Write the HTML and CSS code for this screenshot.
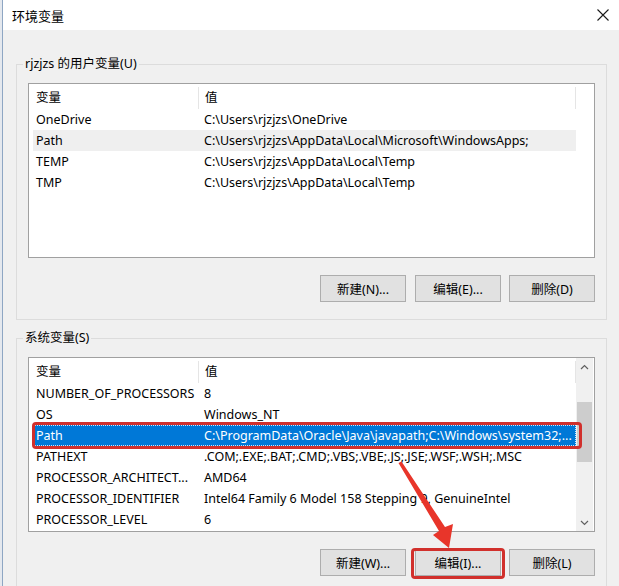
FILE: index.html
```html
<!DOCTYPE html>
<html lang="zh-CN">
<head>
    <meta charset="UTF-8">
    <title>环境变量</title>
    <link rel="stylesheet" href="styles.css">
</head>
<body>
<div class="screen">
    <div class="backdrop"></div>
    <div class="dialog">
        <div class="titlebar">
            <span class="title">环境变量</span>
            <svg class="close" width="12" height="12" viewBox="0 0 12 12">
                <path d="M0.5 0.5 L11.5 11.5 M11.5 0.5 L0.5 11.5" stroke="#1a1a1a" stroke-width="1.1" fill="none"/>
            </svg>
        </div>

        <div class="body">
            <fieldset class="group">
                <legend>rjzjzs 的用户变量(U)</legend>
                <div class="list">
                    <div class="rows">
                        <div class="row head"><span class="c1">变量</span><span class="c2">值</span></div>
                        <div class="row"><span class="c1">OneDrive</span><span class="c2">C:\Users\rjzjzs\OneDrive</span></div>
                        <div class="row hover"><span class="c1">Path</span><span class="c2">C:\Users\rjzjzs\AppData\Local\Microsoft\WindowsApps;</span></div>
                        <div class="row"><span class="c1">TEMP</span><span class="c2">C:\Users\rjzjzs\AppData\Local\Temp</span></div>
                        <div class="row"><span class="c1">TMP</span><span class="c2">C:\Users\rjzjzs\AppData\Local\Temp</span></div>
                    </div>
                </div>
                <div class="buttons">
                    <button class="btn">新建(N)...</button>
                    <button class="btn">编辑(E)...</button>
                    <button class="btn">删除(D)</button>
                </div>
            </fieldset>

            <fieldset class="group">
                <legend>系统变量(S)</legend>
                <div class="list">
                    <div class="rows">
                        <div class="row head"><span class="c1">变量</span><span class="c2">值</span></div>
                        <div class="row"><span class="c1">NUMBER_OF_PROCESSORS</span><span class="c2">8</span></div>
                        <div class="row"><span class="c1">OS</span><span class="c2">Windows_NT</span></div>
                        <div class="row selected">
                            <span class="c1">Path</span><span class="c2">C:\ProgramData\Oracle\Java\javapath;C:\Windows\system32;...</span>
                            <span class="mark row-mark"></span>
                        </div>
                        <div class="row"><span class="c1">PATHEXT</span><span class="c2">.COM;.EXE;.BAT;.CMD;.VBS;.VBE;.JS;.JSE;.WSF;.WSH;.MSC</span></div>
                        <div class="row"><span class="c1">PROCESSOR_ARCHITECT...</span><span class="c2">AMD64</span></div>
                        <div class="row"><span class="c1">PROCESSOR_IDENTIFIER</span><span class="c2">Intel64 Family 6 Model 158 Stepping 9, GenuineIntel</span></div>
                        <div class="row"><span class="c1">PROCESSOR_LEVEL</span><span class="c2">6</span></div>
                    </div>
                    <div class="scrollbar">
                        <div class="arrow-btn">
                            <svg width="9" height="6" viewBox="0 0 9 6"><path d="M1 5 L4.5 1.5 L8 5" stroke="#606060" stroke-width="1.2" fill="none"/></svg>
                        </div>
                        <div class="track"><div class="thumb"></div></div>
                        <div class="arrow-btn">
                            <svg width="9" height="6" viewBox="0 0 9 6"><path d="M1 1 L4.5 4.5 L8 1" stroke="#606060" stroke-width="1.2" fill="none"/></svg>
                        </div>
                    </div>
                </div>
                <div class="buttons">
                    <button class="btn">新建(W)...</button>
                    <button class="btn marked">编辑(I)...<span class="mark btn-mark"></span></button>
                    <button class="btn">删除(L)</button>
                </div>
            </fieldset>
        </div>
    </div>

    <!-- annotation arrow, drawn in page coordinates -->
    <svg class="pointer" width="619" height="586" viewBox="0 0 619 586">
        <polygon points="398.5,463 401.5,461.5 445,527 453,524 449,548 433,535 439,531" fill="#e8352a"/>
    </svg>
</div>
</body>
</html>
```

FILE: styles.css
```css
body { margin: 0; font-family: "Noto Sans", "Noto Sans CJK SC", sans-serif; font-size: 12.5px; color: #000; }

.screen { position: relative; display: flex; width: 619px; height: 586px; overflow: hidden; background: #f0f0f0; }
.backdrop { width: 3px; flex: none; background: #e4e8ee; box-shadow: inset -1px 0 #8ea6c3; }
.dialog { flex: 1; display: flex; flex-direction: column; background: #f0f0f0; }

.titlebar { height: 30px; flex: none; display: flex; align-items: center; justify-content: space-between; padding: 0 10px 0 9px; background: #fff; }
.title { font-size: 13px; }
.close { margin-top: -1px; }

.body { padding: 25px 12px 0 13px; }

.group { margin: 0; min-width: 0; padding: 10px 11px 17px 11px; border: 1px solid #dcdcdc; }
.group + .group { margin-top: 9px; }
.group legend { margin-left: -5px; padding: 0 2px; line-height: 18px; font-size: 12.5px; }

.list { display: flex; height: 173px; border: 1px solid #a0a0a0; background: #fff; }
.rows { width: 543px; flex: none; padding-left: 4px; }

.row { position: relative; display: flex; height: 21px; align-items: center; white-space: nowrap; }
.row.head { height: 25px; }
.c1 { width: 162px; flex: none; padding-left: 3px; overflow: hidden; }
.c2 { flex: 1; padding-left: 6px; overflow: hidden; }
.head .c1, .head .c2 { height: 22px; line-height: 22px; margin-top: 2px; }
.head .c1 { border-right: 1px solid #e5e5e5; }
.head .c2 { border-right: 1px solid #e5e5e5; }

.row.hover { background: #efefef; }
.row.selected { background: #0078d7; color: #fff; outline: 1px dotted #cfe4f7; outline-offset: -1px; }

.scrollbar { width: 17px; flex: none; display: flex; flex-direction: column; background: #f0f0f0; }
.arrow-btn { height: 17px; display: flex; align-items: center; justify-content: center; }
.track { flex: 1; }
.thumb { height: 60px; margin: 27px 1px 0 1px; background: #cdcdcd; }

.buttons { display: flex; justify-content: flex-end; gap: 8px; margin-top: 17px; }
.btn { position: relative; width: 86px; height: 27px; padding: 0; border: 1px solid #adadad; background: #e1e1e1; font-family: inherit; font-size: 12.5px; color: #000; }
.btn:first-child { margin-right: 1px; }

.mark { position: absolute; border: 3px solid #d1302c; border-radius: 4px; pointer-events: none; }
.row-mark { left: -1px; right: -6px; top: -3px; bottom: -3px; }
.btn-mark { left: -5px; right: -5px; top: -2px; bottom: -4px; }

.pointer { position: absolute; left: 0; top: 0; pointer-events: none; }
```
